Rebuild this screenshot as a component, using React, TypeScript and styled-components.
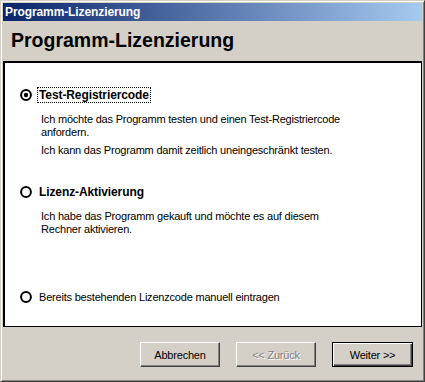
import styled, { createGlobalStyle } from "styled-components";

const GlobalStyle = createGlobalStyle`
    html, body {
        margin: 0;
        padding: 0;
        background: #d4d0c8;
    }
    body {
        font-family: "Liberation Sans", Arial, sans-serif;
    }
`;

const Window = styled.div`
    width: 425px;
    height: 382px;
    box-sizing: border-box;
    display: flex;
    flex-direction: column;
    background: #d4d0c8;
    border-top: 1px solid #d4d0c8;
    border-left: 1px solid #d4d0c8;
    border-right: 1px solid #404040;
    border-bottom: 1px solid #404040;
    box-shadow: inset 1px 1px 0 #ffffff, inset -1px -1px 0 #808080;
    padding: 2px;
`;

const TitleBar = styled.div`
    height: 18px;
    flex-shrink: 0;
    display: flex;
    align-items: center;
    padding-left: 2px;
    background: linear-gradient(to right, #0a246a, #a6caf0);
    color: #ffffff;
    font-size: 12px;
    font-weight: bold;
    letter-spacing: -0.1px;
`;

const Header = styled.div`
    height: 40px;
    flex-shrink: 0;
    box-sizing: border-box;
    padding: 8px 0 0 8px;
`;

const Heading = styled.h1`
    margin: 0;
    font-size: 19.5px;
    font-weight: bold;
    line-height: 22px;
    color: #000000;
`;

const Panel = styled.div`
    height: 266px;
    flex-shrink: 0;
    box-sizing: border-box;
    background: #ffffff;
    border: 1px solid #000000;
    box-shadow: inset 1px 1px 0 #000000;
    padding: 25px 0 0 1px;
    display: flex;
    flex-direction: column;
`;

const Option = styled.div<{ $gap: number }>`
    display: flex;
    flex-direction: column;
    margin-top: ${(p) => p.$gap}px;
`;

const OptionRow = styled.div`
    display: flex;
    align-items: center;
    padding-left: 15px;
    gap: 5px;
`;

const RadioMark = styled.svg`
    width: 12px;
    height: 12px;
    flex-shrink: 0;
`;

const Label = styled.span<{ $bold?: boolean; $focus?: boolean }>`
    border: 1px ${(p) => (p.$focus ? "dotted #000000" : "solid transparent")};
    padding: 0 1px;
    font-size: ${(p) => (p.$bold ? "12px" : "11px")};
    font-weight: ${(p) => (p.$bold ? "bold" : "normal")};
    letter-spacing: ${(p) => (p.$bold ? "-0.1px" : "-0.2px")};
    line-height: 14px;
    color: #000000;
`;

const Description = styled.p`
    margin: 0;
    padding-left: 36px;
    width: 320px;
    font-size: 11px;
    letter-spacing: -0.2px;
    line-height: 13px;
    color: #000000;
    & + & {
        margin-top: 5px;
    }
`;

const DescBlock = styled.div`
    margin-top: 10px;
`;

const Footer = styled.div`
    flex: 1;
    display: flex;
    justify-content: flex-end;
    align-items: flex-start;
    gap: 16px;
    padding: 15px 9px 0 0;
`;

const Button = styled.button<{ $default?: boolean }>`
    width: ${(p) => (p.$default ? "81px" : "80px")};
    height: 25px;
    box-sizing: border-box;
    margin: 0;
    padding: 0;
    background: #d4d0c8;
    font-family: "Liberation Sans", Arial, sans-serif;
    font-size: 11px;
    letter-spacing: -0.2px;
    color: #000000;
    border: 1px solid;
    border-color: ${(p) =>
        p.$default ? "#000000" : "#ffffff #404040 #404040 #ffffff"};
    box-shadow: ${(p) =>
        p.$default
            ? "inset 1px 1px 0 #ffffff, inset -1px -1px 0 #404040, inset -2px -2px 0 #808080"
            : "inset -1px -1px 0 #808080"};
    &:disabled {
        color: #808080;
        text-shadow: 1px 1px 0 #ffffff;
    }
`;

function Radio({ checked }: { checked?: boolean }) {
    return (
        <RadioMark viewBox="0 0 12 12">
            <circle cx="6" cy="6" r="4.9" fill="#ffffff" stroke="#000000" strokeWidth="2" />
            {checked && <circle cx="6" cy="6" r="2.2" fill="#000000" />}
        </RadioMark>
    );
}

export default function App() {
    return (
        <>
            <GlobalStyle />
            <Window>
                <TitleBar>Programm-Lizenzierung</TitleBar>
                <Header>
                    <Heading>Programm-Lizenzierung</Heading>
                </Header>
                <Panel>
                    <Option $gap={0}>
                        <OptionRow>
                            <Radio checked />
                            <Label $bold $focus>Test-Registriercode</Label>
                        </OptionRow>
                        <DescBlock>
                            <Description>
                                Ich möchte das Programm testen und einen Test-Registriercode anfordern.
                            </Description>
                            <Description>
                                Ich kann das Programm damit zeitlich uneingeschränkt testen.
                            </Description>
                        </DescBlock>
                    </Option>
                    <Option $gap={27}>
                        <OptionRow>
                            <Radio />
                            <Label $bold>Lizenz-Aktivierung</Label>
                        </OptionRow>
                        <DescBlock>
                            <Description>
                                Ich habe das Programm gekauft und möchte es auf diesem Rechner aktivieren.
                            </Description>
                        </DescBlock>
                    </Option>
                    <Option $gap={53}>
                        <OptionRow>
                            <Radio />
                            <Label>Bereits bestehenden Lizenzcode manuell eintragen</Label>
                        </OptionRow>
                    </Option>
                </Panel>
                <Footer>
                    <Button>Abbrechen</Button>
                    <Button disabled>&lt;&lt; Zurück</Button>
                    <Button $default>Weiter &gt;&gt;</Button>
                </Footer>
            </Window>
        </>
    );
}
